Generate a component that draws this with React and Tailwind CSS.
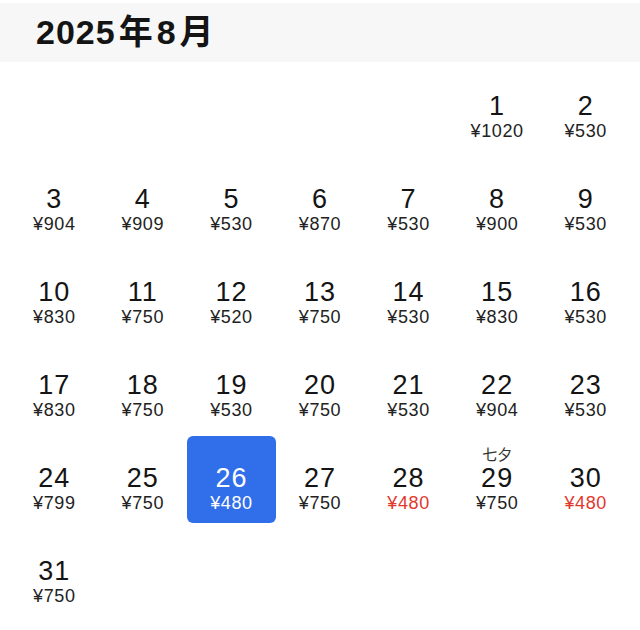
const days = [
  { d: 1, p: 1020 }, { d: 2, p: 530 },
  { d: 3, p: 904 }, { d: 4, p: 909 }, { d: 5, p: 530 }, { d: 6, p: 870 }, { d: 7, p: 530 }, { d: 8, p: 900 }, { d: 9, p: 530 },
  { d: 10, p: 830 }, { d: 11, p: 750 }, { d: 12, p: 520 }, { d: 13, p: 750 }, { d: 14, p: 530 }, { d: 15, p: 830 }, { d: 16, p: 530 },
  { d: 17, p: 830 }, { d: 18, p: 750 }, { d: 19, p: 530 }, { d: 20, p: 750 }, { d: 21, p: 530 }, { d: 22, p: 904 }, { d: 23, p: 530 },
  { d: 24, p: 799 }, { d: 25, p: 750 }, { d: 26, p: 480, selected: true }, { d: 27, p: 750 }, { d: 28, p: 480, low: true },
  { d: 29, p: 750, label: '七夕' }, { d: 30, p: 480, low: true },
  { d: 31, p: 750 },
]

const LEADING_BLANKS = 5

function DayCell({ day }) {
  const base = day.selected
    ? 'bg-[#316ee9] text-white rounded-[6px]'
    : 'text-[#141414]'
  const priceColor = day.selected ? 'text-white' : day.low ? 'text-[#e2382c]' : 'text-[#222]'
  return (
    <div className={`flex flex-col items-center justify-center ${base}`}>
      <div className="h-[18px] text-[15px] leading-[18px] text-[#333]">{day.label ?? ''}</div>
      <div className="text-[27px] leading-[28px] tracking-[1px]">{day.d}</div>
      <div className={`text-[18px] leading-[22px] tracking-[0.6px] ${priceColor}`}>¥{day.p}</div>
    </div>
  )
}

export default function App() {
  return (
    <div className="w-[640px] h-[630px] bg-white font-['Liberation_Sans','Noto_Sans_CJK_JP',sans-serif]">
      <div className="pt-[3px]">
        <div className="h-[59px] bg-[#f7f7f7] flex items-center pl-[36px]">
          <h1 className="text-[34px] font-bold text-[#141414] tracking-[1px]">
            2025<span className="mx-[3px]">年</span>8<span className="ml-[3px]">月</span>
          </h1>
        </div>
      </div>
      <div className="grid grid-cols-7 auto-rows-[87px] gap-y-[6px] px-[10px] mt-[2px]">
        {Array.from({ length: LEADING_BLANKS }).map((_, i) => (
          <div key={`b${i}`} />
        ))}
        {days.map((day) => (
          <DayCell key={day.d} day={day} />
        ))}
      </div>
    </div>
  )
}
